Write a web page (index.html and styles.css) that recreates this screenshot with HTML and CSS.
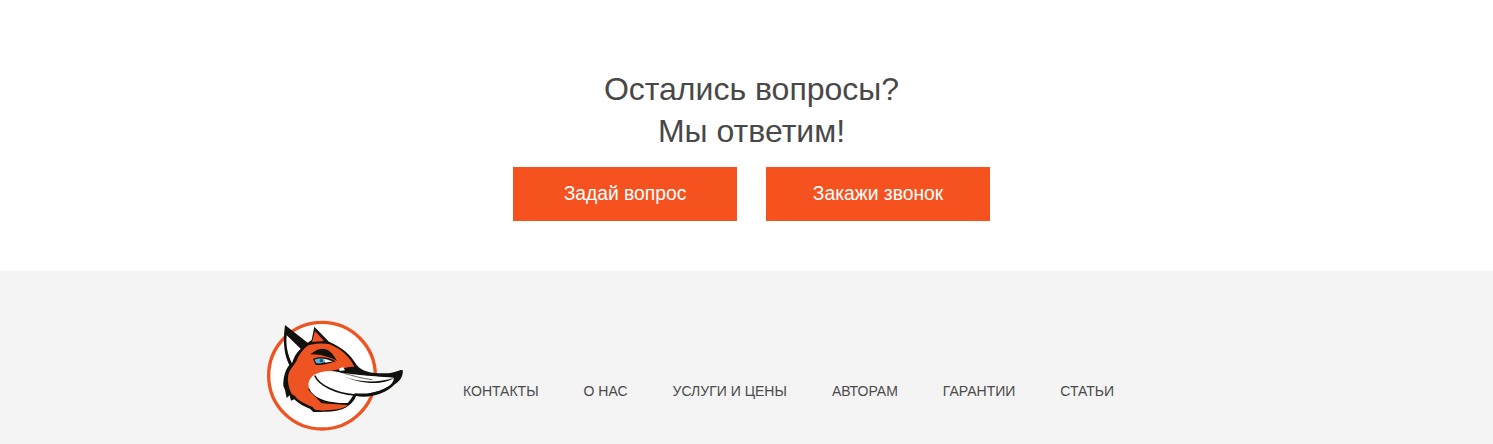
FILE: index.html
```html
<!DOCTYPE html>
<html lang="ru">
<head>
<meta charset="utf-8">
<title>Остались вопросы?</title>
<link rel="stylesheet" href="styles.css">
</head>
<body>
<section class="ask">
  <h2 class="ask-title">Остались вопросы?<br>Мы ответим!</h2>
  <div class="ask-actions">
    <a class="btn" href="#">Задай вопрос</a>
    <a class="btn" href="#">Закажи звонок</a>
  </div>
</section>
<footer class="footer">
  <svg class="logo" viewBox="0 0 480 390" width="160" height="130" aria-label="Логотип">
    <circle cx="201" cy="197" r="160" fill="#fff" stroke="#ee5322" stroke-width="10"/>
    <path fill="#12110d" d="M90 45 L158 98 L170 90 L178 50 L222 95 C262 112 288 135 305 165 C322 186 350 191 400 190 C420 188 432 179 443 180 C446 198 434 214 420 222 C395 250 345 266 303 258 C296 280 270 300 240 303 C215 307 195 305 175 306 L165 296 C150 292 130 280 118 268 L108 272 L104 256 L95 264 L90 240 L85 228 C84 205 90 180 103 165 C90 140 82 105 90 45 Z"/>
    <path fill="#fff" d="M95 76 L137 116 C124 128 116 142 111 160 C98 135 92 105 95 76 Z"/>
    <path fill="#ee5322" d="M180 63 L207 93 L171 96 Z"/>
    <path fill="#ee5322" d="M160 106 C180 100 205 99 222 102 C258 116 284 140 298 170 C272 170 255 178 240 180 L180 195 L160 240 L200 280 L278 285 C264 298 240 299 215 301 C200 302 185 302 178 298 L172 290 C150 282 128 272 120 258 L110 252 C102 235 96 215 100 195 C104 178 116 168 126 150 C133 130 148 115 160 106 Z"/>
    <path fill="#fff" d="M250 186 C275 192 340 198 416 203 C418 215 405 228 390 236 C360 250 330 252 300 250 C292 258 286 272 278 279 C225 280 185 268 168 245 C156 228 158 210 176 195 C200 182 225 180 250 186 Z"/>
    <path fill="none" stroke="#12110d" stroke-width="5" stroke-linecap="round" d="M180 198 C192 225 240 250 300 255 C350 258 400 240 426 212"/>
    <path fill="none" stroke="#12110d" stroke-width="2" d="M254 186 C290 196 320 206 352 209"/>
    <path fill="#12110d" d="M264 198 C300 214 360 222 416 204 C385 226 320 224 264 198 Z"/>
    <path fill="#12110d" d="M166 133 C178 124 195 112 212 118 C226 122 236 135 246 153 C225 141 195 132 166 133 Z"/>
    <path fill="#12110d" d="M174 147 C190 138 220 140 242 154 C225 160 198 168 182 164 Z"/>
    <path fill="#5ab0de" d="M178 149 C190 144 208 144 222 150 C212 157 195 162 184 160 Z"/>
    <circle cx="199" cy="152" r="5" fill="#1f4f73"/>
    <path fill="#fff" d="M207 147 L234 154 L211 158 Z"/>
    <path fill="#fff" d="M252 176 L264 171 L270 181 L254 183 Z"/>
  </svg>
  <nav class="nav">
    <a href="#">КОНТАКТЫ</a>
    <a href="#">О НАС</a>
    <a href="#">УСЛУГИ И ЦЕНЫ</a>
    <a href="#">АВТОРАМ</a>
    <a href="#">ГАРАНТИИ</a>
    <a href="#">СТАТЬИ</a>
  </nav>
</footer>
</body>
</html>
```
FILE: styles.css
```css
* { box-sizing: border-box; }
html, body { margin: 0; height: 100%; }
body { font-family: "Liberation Sans", Arial, sans-serif; color: #444; background: #fff; overflow: hidden; }
.ask { height: 271px; padding: 68px 0 0 10px; display: flex; flex-direction: column; align-items: center; }
.ask-title { margin: 0; font-size: 32px; line-height: 42px; font-weight: 400; text-align: center; color: #484848; }
.ask-actions { display: flex; gap: 29px; margin-top: 15px; }
.btn { display: flex; align-items: center; justify-content: center; width: 224px; height: 54px; background: #f6521f; color: #fff; font-size: 19.3px; text-decoration: none; }
.footer { height: 173px; background: #f4f4f4; display: flex; align-items: flex-start; padding: 39px 0 0 255px; }
.logo { display: block; flex: none; }
.nav { display: flex; gap: 45px; margin: 72px 0 0 48px; }
.nav a { font-size: 14px; line-height: 18px; color: #4a4a4a; text-decoration: none; }
```
